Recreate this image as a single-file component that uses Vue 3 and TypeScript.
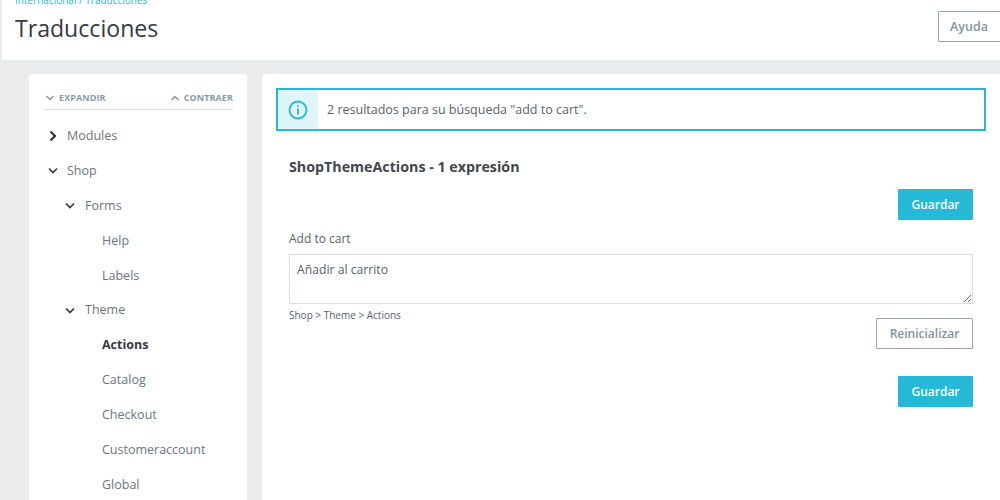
<script setup lang="ts">
interface Row { label: string; level: number; icon?: 'right' | 'down'; active?: boolean }
const rows: Row[] = [
  { label: 'Modules', level: 0, icon: 'right' },
  { label: 'Shop', level: 0, icon: 'down' },
  { label: 'Forms', level: 1, icon: 'down' },
  { label: 'Help', level: 2 },
  { label: 'Labels', level: 2 },
  { label: 'Theme', level: 1, icon: 'down' },
  { label: 'Actions', level: 2, active: true },
  { label: 'Catalog', level: 2 },
  { label: 'Checkout', level: 2 },
  { label: 'Customeraccount', level: 2 },
  { label: 'Global', level: 2 },
]
</script>

<template>
  <div class="page">
    <header class="header">
      <div class="titles">
        <div class="crumb">Internacional / Traducciones</div>
        <h1 class="title">Traducciones</h1>
      </div>
      <button class="btn-outline help">Ayuda</button>
    </header>
    <div class="content">
      <aside class="side">
        <div class="tools">
          <span class="tool">
            <svg width="10" height="6" viewBox="0 0 10 6"><path d="M1.500 1 5 4.500 8.500 1" fill="none" stroke="#8a9aa5" stroke-width="1.500"/></svg>
            EXPANDIR
          </span>
          <span class="tool">
            <svg width="10" height="6" viewBox="0 0 10 6"><path d="M1.500 5 5 1.500 8.500 5" fill="none" stroke="#8a9aa5" stroke-width="1.500"/></svg>
            CONTRAER
          </span>
        </div>
        <ul class="tree">
          <li v-for="r in rows" :key="r.label" class="row" :class="['lv' + r.level, { active: r.active }]">
            <span v-if="r.icon" class="caret">
              <svg v-if="r.icon === 'right'" width="10" height="12" viewBox="0 0 10 12"><path d="M2.500 1.500 7 6l-4.500 4.500" fill="none" stroke="#25292d" stroke-width="2"/></svg>
              <svg v-else width="10" height="8" viewBox="0 0 10 8"><path d="M1 1.500 5 5.500 9 1.500" fill="none" stroke="#363a41" stroke-width="1.700"/></svg>
            </span>
            {{ r.label }}
          </li>
        </ul>
      </aside>
      <main class="main">
        <div class="alert">
          <div class="alert-icon">
            <svg width="20" height="20" viewBox="0 0 20 20">
              <circle cx="10" cy="10" r="8.500" fill="none" stroke="#25b9d7" stroke-width="1.800"/>
              <rect x="9.100" y="8.500" width="1.800" height="6" fill="#25b9d7"/>
              <rect x="9.100" y="5.300" width="1.800" height="1.800" fill="#25b9d7"/>
            </svg>
          </div>
          <p class="alert-text">2 resultados para su búsqueda "add to cart".</p>
        </div>
        <section class="form">
          <h2 class="domain">ShopThemeActions - 1 expresión</h2>
          <div class="actions first"><button class="btn-primary">Guardar</button></div>
          <label class="label" for="tr">Add to cart</label>
          <textarea id="tr" class="input" readonly>Añadir al carrito</textarea>
          <div class="path">Shop &gt; Theme &gt; Actions</div>
          <div class="actions reset"><button class="btn-outline">Reinicializar</button></div>
          <div class="actions last"><button class="btn-primary">Guardar</button></div>
        </section>
      </main>
    </div>
  </div>
</template>

<style scoped>
.page {
  width: 1000px;
  height: 500px;
  overflow: hidden;
  background: #eaebec;
  font-family: "Open Sans", "Noto Sans", sans-serif;
  color: #363a41;
}
.header {
  height: 60px;
  margin-left: 2px;
  padding: 0 0 0 13px;
  background: #fff;
  display: flex;
  justify-content: space-between;
  align-items: flex-start;
  overflow: hidden;
}
.crumb {
  margin-top: -6px;
  height: 12px;
  line-height: 12px;
  font-size: 10px;
  color: #25b9d7;
}
.title {
  margin: 7px 0 0;
  font-size: 23.100px;
  line-height: 30px;
  font-weight: 400;
  color: #363a41;
}
button {
  font-family: inherit;
  font-weight: 600;
  font-size: 12px;
  box-sizing: border-box;
  cursor: pointer;
}
.btn-outline {
  height: 31px;
  background: #fff;
  color: #83949f;
  border: 1px solid #94a5ae;
  border-radius: 1px;
  padding: 0 12px;
}
.help {
  margin-top: 11px;
  width: 67px;
  flex: none;
  margin-right: -5px;
  padding-left: 11px;
  font-size: 12.500px;
  text-align: left;
}
.content {
  display: flex;
  align-items: flex-start;
  gap: 15px;
  padding: 14px 0 0 29px;
}
.side {
  width: 218px;
  height: 440px;
  flex: none;
  background: #fff;
  border-radius: 4px;
  padding: 17px 14px 0 14px;
  box-sizing: border-box;
}
.tools {
  display: flex;
  justify-content: space-between;
  height: 18px;
  padding: 0 0 0 2px;
  border-bottom: 1px solid #d5e0e6;
  font-size: 9px;
  line-height: 13px;
  font-weight: 700;
  letter-spacing: 0.1px;
  color: #8a9aa5;
}
.tool { display: inline-flex; align-items: center; gap: 4px; height: 13px; }
.tree {
  list-style: none;
  margin: 0;
  padding: 9px 0 0;
}
.row {
  height: 34.900px;
  line-height: 34.900px;
  font-size: 12.500px;
  color: #6c757d;
  position: relative;
}
.lv0 { padding-left: 24px; }
.lv1 { padding-left: 42px; }
.lv2 { padding-left: 59px; }
.row.active { font-weight: 700; color: #363a41; }
.caret {
  position: absolute;
  top: 0;
  height: 100%;
  display: flex;
  align-items: center;
}
.lv0 .caret { left: 5px; }
.lv1 .caret { left: 22px; }
.main {
  width: 738px;
  height: 440px;
  flex: none;
  background: #fff;
  border-radius: 4px 0 0 4px;
  padding: 14px;
  box-sizing: border-box;
}
.alert {
  width: 710px;
  height: 43px;
  box-sizing: border-box;
  border: 2px solid #25b9d7;
  display: flex;
  align-items: stretch;
}
.alert-icon {
  width: 40px;
  flex: none;
  background: #dff5f9;
  display: flex;
  align-items: center;
  justify-content: center;
}
.alert-text {
  margin: 0;
  padding-left: 9px;
  font-size: 12.500px;
  line-height: 39px;
  color: #5a6268;
}
.form { padding: 0 13px; width: 684px; }
.domain {
  margin: 26px 0 0;
  font-size: 14.250px;
  line-height: 20px;
  font-weight: 700;
  color: #42464d;
}
.actions { display: flex; justify-content: flex-end; }
.first { margin-top: 12px; }
.btn-primary {
  width: 75px;
  height: 31px;
  background: #25b9d7;
  color: #fff;
  border: 0;
  border-radius: 1px;
}
.label {
  display: block;
  margin-top: 10px;
  font-size: 12px;
  line-height: 18px;
  color: #5a6268;
}
.input {
  display: block;
  width: 100%;
  height: 50px;
  margin-top: 6px;
  box-sizing: border-box;
  border: 1px solid #d5e0e6;
  padding: 6px 7px;
  font-family: inherit;
  font-size: 12.200px;
  line-height: 18px;
  color: #5a6268;
  outline: none;
}
.path {
  margin-top: 4px;
  font-size: 10px;
  line-height: 14px;
  color: #5a6268;
}
.reset { margin-top: -4px; }
.reset .btn-outline { width: 97px; padding: 0; }
.last { margin-top: 27px; }
</style>
